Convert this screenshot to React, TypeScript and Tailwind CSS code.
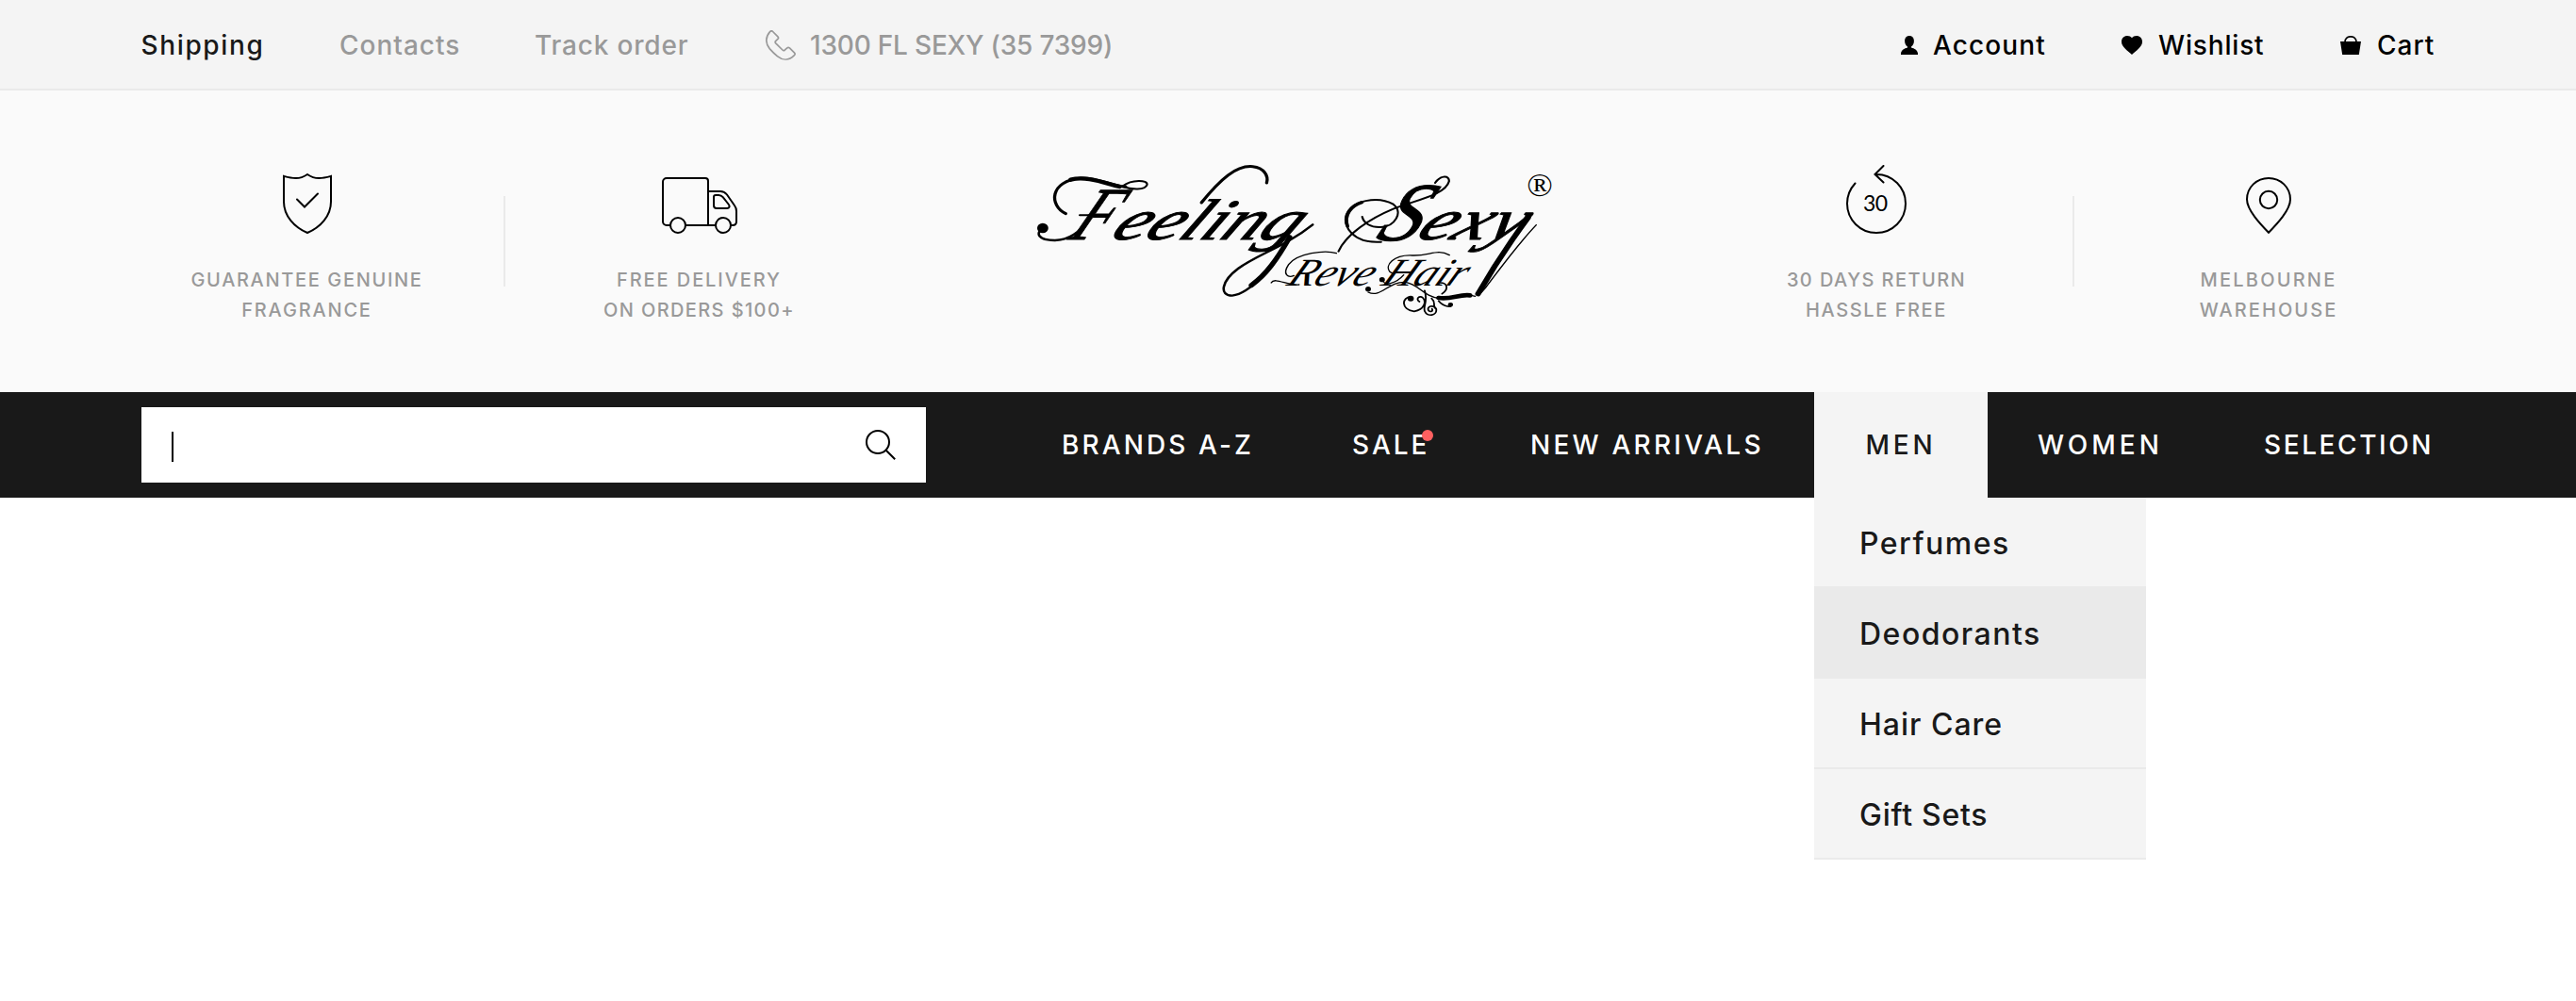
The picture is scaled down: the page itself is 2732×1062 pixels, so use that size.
import type { ReactNode } from "react";

function PhoneIcon() {
  return (
    <svg width="32" height="32" viewBox="0 0 32 32" fill="none" stroke="#999999" strokeWidth="1.7" strokeLinejoin="round">
      <path d="M4.6 1.6 C5.6 .7 6.7 .6 7.6 1.5 L12.9 6.8 C13.8 7.7 13.8 8.6 12.9 9.4 L10.6 11.6 C10 12.4 10 13.1 10.7 13.9 L17.9 21 C18.7 21.8 19.4 21.8 20.2 21.2 L22.5 19.1 C23.6 18.2 24.4 18.2 25.4 18.9 L30.4 23.8 C31.4 24.8 31.4 25.7 30.4 26.6 C24.8 32.3 18 32.3 12.4 27.7 C9.7 25.4 6.6 22.3 4.2 19.6 C-.5 14 -.2 7 4.6 1.6Z" />
    </svg>
  );
}

function UserIcon() {
  return (
    <svg width="18" height="20" viewBox="0 0 18 20" fill="black">
      <path d="M9 0C12 0 13.9 2.200 13.900 5.500C13.900 8.200 12.700 10.300 11 11.500V12.500C14.500 13.500 17.300 15 18 18.500V20H0V18.500C.7 15 3.500 13.500 7 12.500V11.500C5.300 10.300 4.100 8.200 4.100 5.500C4.100 2.200 6 0 9 0Z" />
    </svg>
  );
}

function HeartIcon() {
  return (
    <svg width="22" height="20" viewBox="0 0 22 20" fill="black">
      <path d="M11 2.200C12.200 .7 13.800 0 15.800 0C19.300 0 22 2.500 22 6.200C22 12.200 15 15.700 11 20C7 15.700 0 12.200 0 6.200C0 2.500 2.700 0 6.200 0C8.200 0 9.800 .7 11 2.200Z" />
    </svg>
  );
}

function BagIcon() {
  return (
    <svg width="22" height="20" viewBox="0 0 22 20">
      <path d="M5 6.500C5 3 7.500 .8 11 .8C14.500 .8 17 3 17 6.500" fill="none" stroke="black" strokeWidth="1.700" />
      <path d="M0 6H22L19.800 20H2.200Z" fill="black" />
    </svg>
  );
}

function ShieldIcon() {
  return (
    <svg width="52" height="64" viewBox="0 0 52 64" fill="none" stroke="black" strokeWidth="2" strokeLinecap="round">
      <path d="M1 2.900C10 5.400 17.500 6.900 26 1C34.500 6.900 42 5.400 51 2.900V30C51 45 40 57 26 63C12 57 1 45 1 30Z" />
      <path d="M15 27.500L23 35.500L37 21.500" />
    </svg>
  );
}

function TruckIcon() {
  return (
    <svg width="80" height="60" viewBox="0 0 80 60" fill="none" stroke="black" strokeWidth="2">
      <path d="M9 51H5C2.800 51 1 49.200 1 47V5C1 2.800 2.800 1 5 1H46C48 1 49 2 49 4V51M25 51H57M49 15H62C65 15 67 16 69 18.500L77 30C78.500 32 79 33 79 36V47C79 49.500 77.500 51 75 51H73" />
      <path d="M57 19H60C62 19 63.500 19.700 64.700 21.200L70.500 28.500C72.500 31 71.500 33 69 33H58C56 33 55 32 55 30V21C55 19.700 55.700 19 57 19Z" />
      <circle cx="17" cy="51" r="8" />
      <circle cx="65" cy="51" r="8" />
    </svg>
  );
}

function ReturnIcon() {
  return (
    <svg width="64" height="73" viewBox="0 0 64 73" fill="none" stroke="black" strokeWidth="2" strokeLinecap="round">
      <path d="M9.500 19.500C4 25.500 1 33 1 41A31 31 0 1 0 32 10H31M39.500 1L30.500 10L39.500 18.500" />
      <text x="18" y="49" textLength="26" fill="black" stroke="none" className="font-[Lato] text-[23px] font-normal">30</text>
    </svg>
  );
}

function PinIcon() {
  return (
    <svg width="48" height="60" viewBox="0 0 48 60" fill="none" stroke="black" strokeWidth="2">
      <path d="M24 58.800C15.500 50 1 35 1 23.500C1 10.500 11.500 1 24 1C36.500 1 47 10.500 47 23.500C47 35 32.500 50 24 58.800Z" />
      <circle cx="24" cy="24" r="9.200" />
    </svg>
  );
}

function SearchIcon() {
  return (
    <svg width="32" height="32" viewBox="0 0 32 32" fill="none" stroke="black" strokeWidth="2">
      <circle cx="13" cy="13" r="12" />
      <path d="M21.500 21.500L31.200 31.200" />
    </svg>
  );
}

function Logo() {
  return (
    <svg width="580" height="190" viewBox="0 0 1568 570" preserveAspectRatio="none" fill="none" stroke="black" strokeLinecap="round">
      <g fill="black" strokeWidth="3" className="font-['Liberation_Serif'] font-normal italic">
        <text transform="translate(140 282) skewX(-26)" fontSize="240" textLength="110" lengthAdjust="spacingAndGlyphs">F</text>
        <text transform="translate(258 282) skewX(-30)" fontSize="184" textLength="530" lengthAdjust="spacingAndGlyphs">eeling</text>
        <text transform="translate(1020 286) skewX(-24)" fontSize="265" textLength="120" lengthAdjust="spacingAndGlyphs">S</text>
        <text transform="translate(1134 282) skewX(-30)" fontSize="184" textLength="295" lengthAdjust="spacingAndGlyphs">exy</text>
        <text transform="translate(765 428) skewX(-26)" fontSize="125" textLength="505" lengthAdjust="spacingAndGlyphs" strokeWidth="0">Reve Hair</text>
      </g>
      <text x="1495" y="143" textAnchor="middle" fontSize="98" fill="black" stroke="none" className="font-['Liberation_Serif'] font-normal">®</text>

      {/* Capital swashes */}
      <path d="M136 200C88 175 88 95 180 87C230 85 260 110 308 115" strokeWidth="9" />
      <path d="M150 92C190 80 235 98 290 114" strokeWidth="13" />
      <path d="M300 112C325 90 372 92 369 108C364 126 325 124 300 114M176 205H250" strokeWidth="6" />
      <path d="M72 246C48 262 56 285 105 285C150 284 180 255 205 215" strokeWidth="7" />
      <circle cx="70" cy="246" r="16" fill="black" stroke="none" />
      <path d="M918 320C940 265 1010 215 1075 185C1145 155 1225 140 1235 97C1236 78 1212 76 1195 102" strokeWidth="6" />
      <path d="M1040 290C960 296 930 240 940 205C955 158 1030 142 1075 170C1105 195 1080 240 1040 243C1010 245 990 230 986 210" strokeWidth="6" />
      <path d="M944 240C932 205 955 174 985 164" strokeWidth="10" />

      {/* Ascender and descender flourishes */}
      <path d="M525 165C580 90 625 45 672 50C705 54 718 80 712 102" strokeWidth="9" />
      <path d="M770 285C735 365 665 455 613 461C575 460 582 415 630 375C685 330 765 305 844 235" strokeWidth="7" />
      <path d="M778 275C742 345 710 395 668 428" strokeWidth="15" />
      <path d="M1462 212C1420 275 1365 365 1318 455" strokeWidth="16" />
      <path d="M1485 236C1430 300 1385 370 1340 435L1320 460" strokeWidth="4" />

      {/* Secondary line swashes */}
      <path d="M912 326C880 315 800 325 775 362C755 395 775 405 790 397M725 420C735 400 775 432 805 426" strokeWidth="4" />
      <path d="M1236 332C1200 310 1180 335 1130 333C1075 330 1050 365 1065 385C1075 395 1085 385 1085 385" strokeWidth="4" />
      <path d="M1043 410C1050 435 1085 420 1105 395" strokeWidth="4" />
      <circle cx="1043" cy="410" r="8" fill="black" stroke="none" />

      {/* Vine ornament */}
      <path d="M1003 450C1040 470 1060 415 1110 418C1150 425 1160 465 1210 470C1250 475 1270 450 1310 463" strokeWidth="4" />
      <path d="M1205 468C1240 475 1265 455 1295 460" strokeWidth="14" />
      <path d="M1125 465C1100 465 1095 505 1135 511C1165 505 1170 480 1160 468C1150 458 1138 472 1150 480M1165 445C1175 480 1160 495 1165 510C1172 530 1202 525 1198 503C1190 488 1170 495 1176 508C1182 515 1190 510 1186 503M1185 470C1200 485 1185 495 1198 503M1205 478C1220 498 1245 500 1243 488M1210 420C1230 420 1235 440 1215 455" strokeWidth="5" />
      <circle cx="1125" cy="470" r="9" fill="black" stroke="none" />
      <circle cx="1239" cy="490" r="7" fill="black" stroke="none" />
      <circle cx="1003" cy="440" r="8" fill="black" stroke="none" />
    </svg>
  );
}

function Feature({ icon, children }: { icon: ReactNode; children: ReactNode }) {
  return (
    <>
      <div className="flex h-[88px] items-end justify-center">{icon}</div>
      <div className="mt-[33px] text-center text-xl leading-8 text-[#999999]">{children}</div>
    </>
  );
}

const menu = [
  { label: "Perfumes", style: "bg-[#f4f4f4] tracking-[1.48px]" },
  { label: "Deodorants", style: "bg-[#eaeaea] tracking-[1.5px]" },
  { label: "Hair Care", style: "bg-[#f4f4f4] tracking-[0.99px]" },
  { label: "Gift Sets", style: "bg-[#f4f4f4] tracking-[0.72px]" },
];

export default function App() {
  return (
    <div className="min-h-[1062px] w-[2732px] bg-white font-[Inter,sans-serif] font-[450] whitespace-nowrap text-[#191919]">
      <div className="flex h-24 items-center border-b-2 border-[#eaeaea] bg-[#f4f4f4] pt-[2px] pl-[149.5px] text-[28px] leading-8 text-[#999999]">
        <a className="w-[210.5px] tracking-[1.64px] text-[#191919]">Shipping</a>
        <a className="w-[207px] tracking-[0.98px]">Contacts</a>
        <a className="w-[245px] tracking-[0.81px]">Track order</a>
        <a className="flex w-[1204px] items-center gap-[15px] tracking-[-0.2px]">
          <PhoneIcon />
          1300 FL SEXY (35 7399)
        </a>
        <div className="flex items-center text-black">
          <a className="flex w-[234px] items-center gap-4 tracking-[1.12px]">
            <UserIcon />
            Account
          </a>
          <a className="flex w-[232px] items-center gap-[17px] tracking-[0.83px]">
            <HeartIcon />
            Wishlist
          </a>
          <a className="flex items-center gap-[17px] tracking-[0.98px]">
            <BagIcon />
            Cart
          </a>
        </div>
      </div>

      <div className="flex h-80 bg-[#fafafa] pt-16 pl-[115px]">
        <div className="relative w-[421px]">
          <Feature icon={<ShieldIcon />}>
            <div className="tracking-[1.65px]">GUARANTEE GENUINE</div>
            <div className="tracking-[1.82px]">FRAGRANCE</div>
          </Feature>
          <div className="absolute top-12 right-0 h-24 w-[2px] bg-[#eaeaea]" />
        </div>
        <div className="w-[411px]">
          <Feature icon={<TruckIcon />}>
            <div className="tracking-[1.91px]">FREE DELIVERY</div>
            <div className="tracking-[1.38px]">ON ORDERS $100+</div>
          </Feature>
        </div>
        <div className="w-[835px] pl-[133px]">
          <Logo />
        </div>
        <div className="relative w-[418px] pr-[2px]">
          <Feature icon={<ReturnIcon />}>
            <div className="tracking-[1.42px]">30 DAYS RETURN</div>
            <div className="tracking-[1.58px]">HASSLE FREE</div>
          </Feature>
          <div className="absolute top-12 right-0 h-24 w-[2px] bg-[#eaeaea]" />
        </div>
        <div className="w-[412px]">
          <Feature icon={<PinIcon />}>
            <div className="tracking-[2.2px]">MELBOURNE</div>
            <div className="tracking-[2.07px]">WAREHOUSE</div>
          </Feature>
        </div>
      </div>

      <div className="flex h-28 items-center bg-[#191919] pl-[150px] text-[28px] leading-8 text-white">
        <div className="mr-36 flex h-20 w-[832px] items-center justify-between bg-white px-8">
          <div className="mt-1 h-8 w-[2px] bg-black" />
          <SearchIcon />
        </div>
        <a className="w-[308px] tracking-[3.09px]">BRANDS A-Z</a>
        <a className="relative w-[189px] tracking-[2.95px]">
          SALE
          <span className="absolute top-0 left-[74px] size-3 rounded-full bg-[#ff6060]" />
        </a>
        <a className="w-[301px] tracking-[3.23px]">NEW ARRIVALS</a>
        <div className="relative mr-[53px] flex h-28 w-[184px] items-center bg-[#f4f4f4] pl-[54.5px] tracking-[3.77px] text-[#191919]">
          MEN
          <div className="absolute top-28 left-0 w-[352px] text-[32px]">
            {menu.map((item) => (
              <div key={item.label} className={`flex h-24 items-center border-b-2 border-[#eaeaea] pt-[3px] pl-12 ${item.style}`}>
                {item.label}
              </div>
            ))}
          </div>
        </div>
        <a className="w-60 tracking-[3.98px]">WOMEN</a>
        <a className="tracking-[2.59px]">SELECTION</a>
      </div>
    </div>
  );
}
